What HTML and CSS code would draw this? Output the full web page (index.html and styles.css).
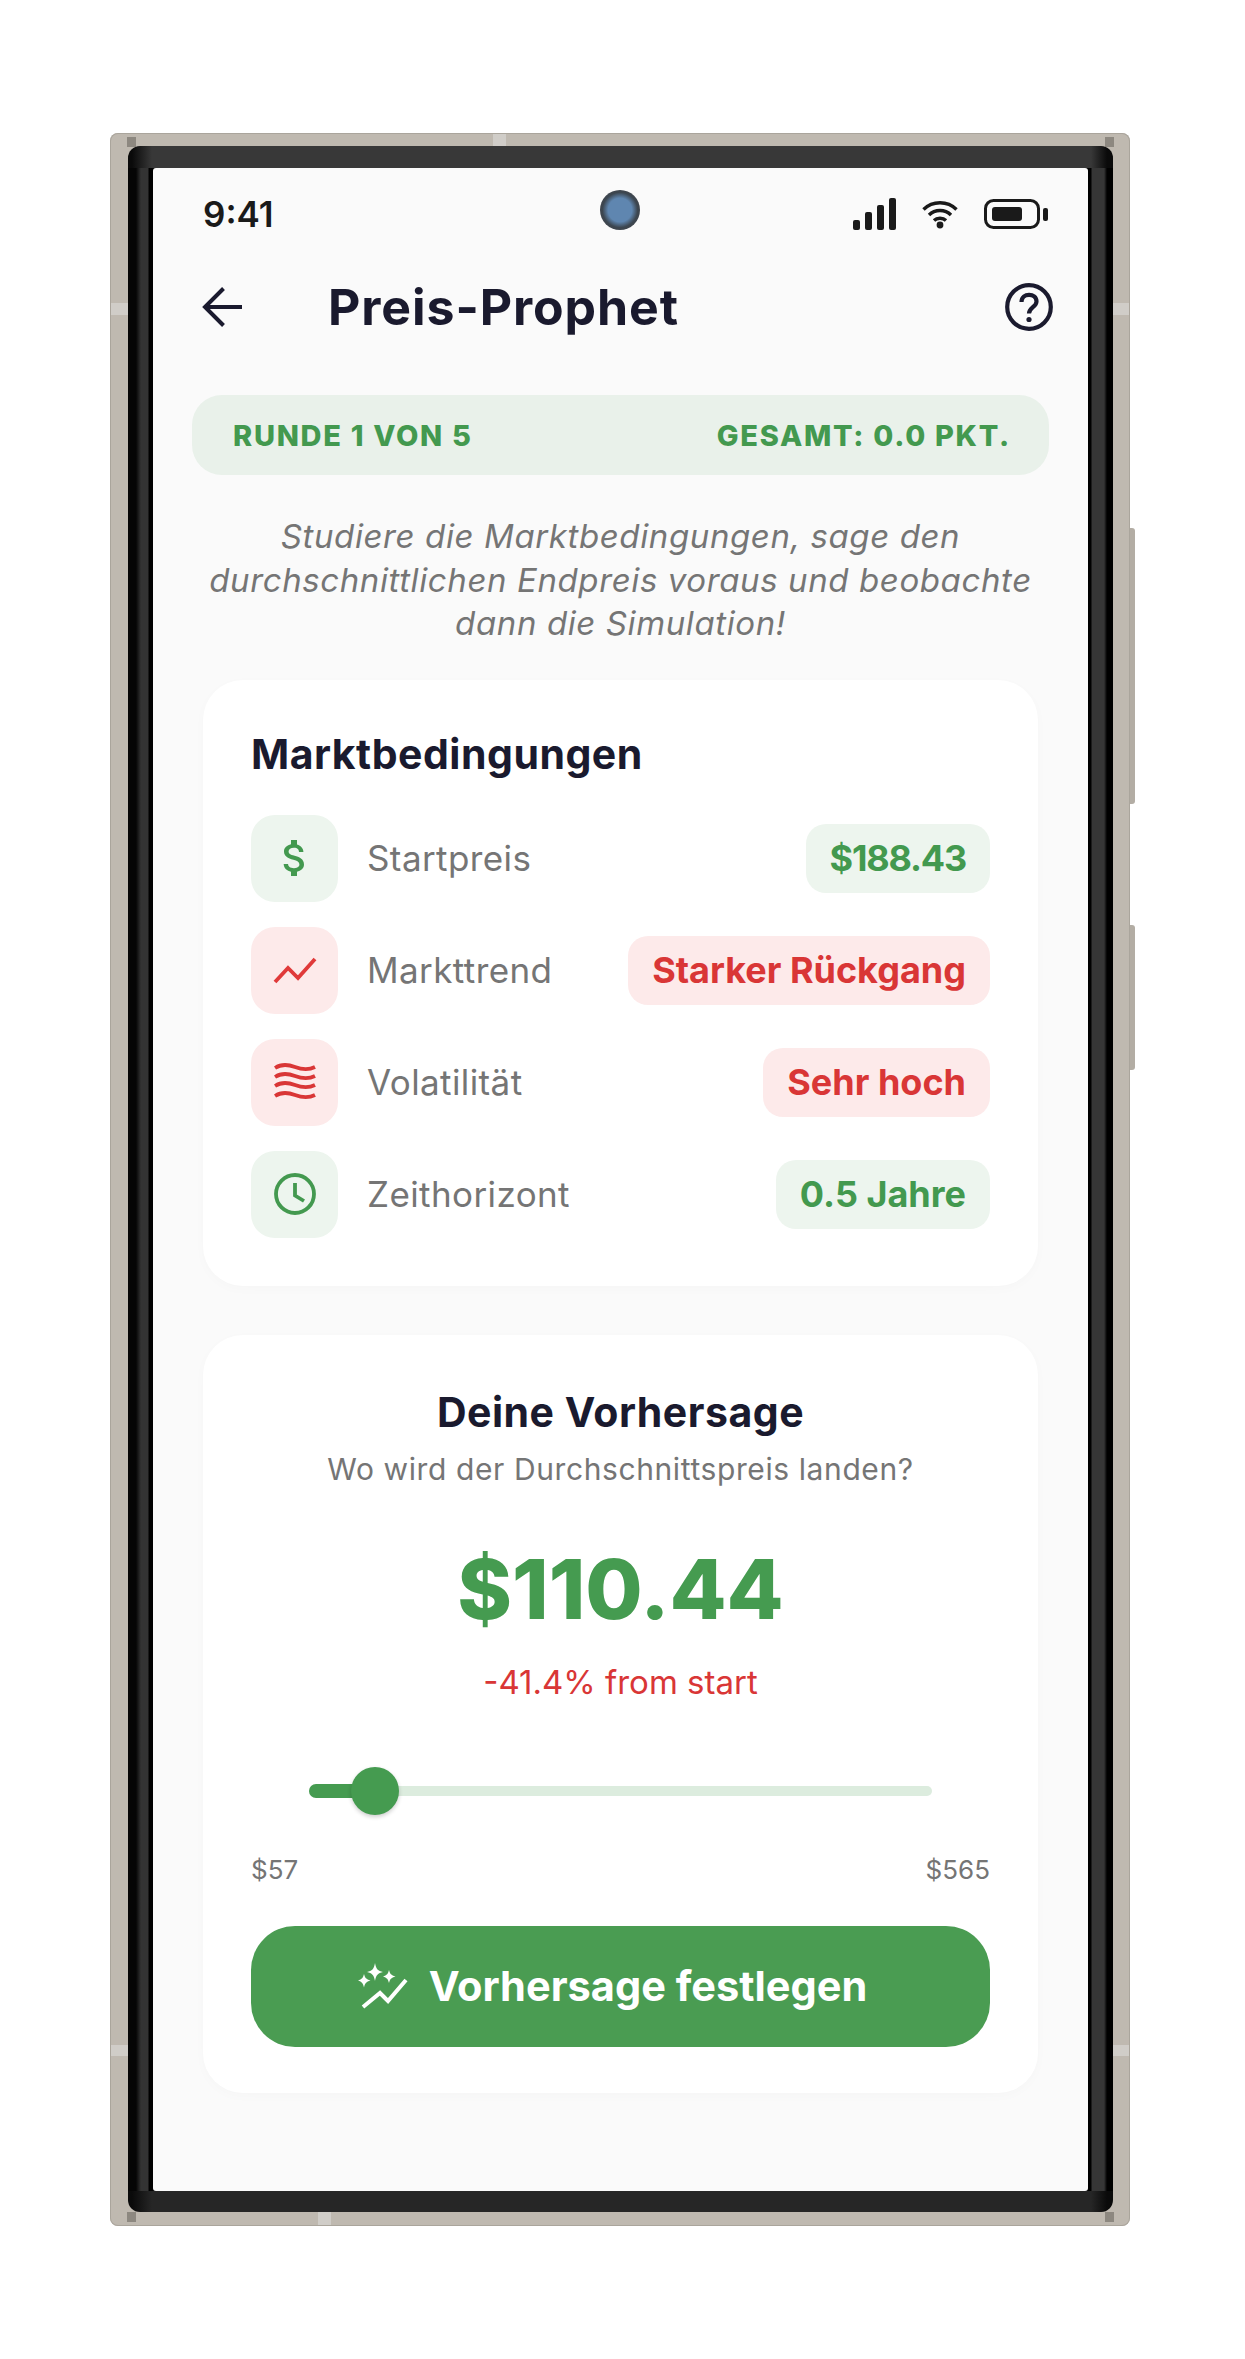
FILE: index.html
```html
<!DOCTYPE html>
<html lang="de">
<head>
    <meta charset="UTF-8">
    <title>Preis-Prophet</title>
    <link rel="stylesheet" href="styles.css">
</head>
<body>
    <div class="phone">
        <span class="band band-top"></span>
        <span class="band band-bottom"></span>
        <span class="band band-left"></span>
        <span class="band band-right"></span>
        <span class="band band-left-low"></span>
        <span class="band band-right-low"></span>
        <span class="notch notch-tl"></span>
        <span class="notch notch-tr"></span>
        <span class="notch notch-bl"></span>
        <span class="notch notch-br"></span>
        <span class="side-key key-power"></span>
        <span class="side-key key-volume"></span>
        <div class="bezel">
            <div class="screen">
                <div class="camera"></div>
                <div class="status-bar">
                    <span class="clock">9:41</span>
                    <div class="status-icons">
                        <svg width="43" height="32" viewBox="0 0 43 32" fill="#1a1a1a">
                            <rect x="0" y="22" width="7" height="10" rx="2"/>
                            <rect x="12" y="14" width="7" height="18" rx="2"/>
                            <rect x="24" y="7" width="7" height="25" rx="2"/>
                            <rect x="36" y="0" width="7" height="32" rx="2"/>
                        </svg>
                        <svg width="36" height="30" viewBox="0 0 36 30" fill="none" stroke="#1a1a1a" stroke-width="3.4">
                            <path d="M1.5 10.5 C10.5 1.5 25.5 1.5 34.5 10.5"/>
                            <path d="M7 16 C13 10 23 10 29 16"/>
                            <path d="M12 21.5 C15 18.5 21 18.5 24 21.5"/>
                            <circle cx="18" cy="26" r="3.4" fill="#1a1a1a" stroke="none"/>
                        </svg>
                        <svg width="64" height="30" viewBox="0 0 64 30">
                            <rect x="1.5" y="1.5" width="53" height="27" rx="8" fill="none" stroke="#1a1a1a" stroke-width="3"/>
                            <rect x="8" y="8" width="30" height="14" rx="3" fill="#1a1a1a"/>
                            <rect x="59" y="9" width="5" height="13" rx="2" fill="#1a1a1a"/>
                        </svg>
                    </div>
                </div>

                <div class="top-bar">
                    <svg class="back-icon" width="40" height="40" viewBox="0 0 40 40" fill="none" stroke="#1a1a2e" stroke-width="4">
                        <path d="M40 20 H3"/>
                        <path d="M21.500 1.500 L3 20 L21.500 38.500"/>
                    </svg>
                    <h1 class="page-title">Preis-Prophet</h1>
                    <svg class="help-icon" width="48" height="48" viewBox="0 0 48 48" fill="none" stroke="#1a1a2e" stroke-width="4.2">
                        <circle cx="24" cy="24" r="21.800"/>
                        <path d="M16.500 19 C16.500 9.500 31.500 9.500 31.500 18.500 C31.500 24 24 24.500 24 30.500"/>
                        <circle cx="24" cy="36.500" r="2.600" fill="#1a1a2e" stroke="none"/>
                    </svg>
                </div>

                <div class="round-banner">
                    <span>RUNDE 1 VON 5</span>
                    <span>GESAMT: 0.0 PKT.</span>
                </div>

                <p class="intro">Studiere die Marktbedingungen, sage den durchschnittlichen Endpreis voraus und beobachte dann die Simulation!</p>

                <section class="card market-card">
                    <h2 class="card-title">Marktbedingungen</h2>
                    <div class="market-row">
                        <div class="row-icon icon-green">
                            <svg width="48" height="48" viewBox="0 0 24 24" fill="#43994f">
                                <path d="M11.800 10.900c-2.270-.590-3-1.200-3-2.150 0-1.090 1.010-1.850 2.700-1.850 1.780 0 2.440.850 2.500 2.100h2.210c-.070-1.720-1.120-3.300-3.210-3.810V3h-3v2.160c-1.940.420-3.500 1.680-3.500 3.610 0 2.310 1.910 3.460 4.700 4.130 2.500.600 3 1.480 3 2.410 0 .690-.490 1.790-2.700 1.790-2.060 0-2.870-.920-2.980-2.100h-2.200c.120 2.190 1.760 3.420 3.680 3.830V21h3v-2.150c1.950-.370 3.500-1.500 3.500-3.550 0-2.840-2.430-3.810-4.700-4.400z"/>
                            </svg>
                        </div>
                        <span class="row-label">Startpreis</span>
                        <span class="pill pill-green pill-price">$188.43</span>
                    </div>
                    <div class="market-row">
                        <div class="row-icon icon-red">
                            <svg width="44" height="30" viewBox="0 0 44 30" fill="none" stroke="#e03a3a" stroke-width="3.800">
                                <path d="M2 27 L15 13 L25 23 L42 4"/>
                            </svg>
                        </div>
                        <span class="row-label">Markttrend</span>
                        <span class="pill pill-red">Starker Rückgang</span>
                    </div>
                    <div class="market-row">
                        <div class="row-icon icon-red">
                            <svg width="42" height="38" viewBox="0 0 42 38" fill="none" stroke="#d93636" stroke-width="3.800">
                                <path d="M1 5 C7 1 13 1 21 4 C29 7 35 7 41 4"/>
                                <path d="M1 14 C7 10 13 10 21 13 C29 16 35 16 41 13"/>
                                <path d="M1 23 C7 19 13 19 21 22 C29 25 35 25 41 22"/>
                                <path d="M1 33 C7 29 13 29 21 32 C29 35 35 35 41 32"/>
                            </svg>
                        </div>
                        <span class="row-label">Volatilität</span>
                        <span class="pill pill-red">Sehr hoch</span>
                    </div>
                    <div class="market-row">
                        <div class="row-icon icon-green">
                            <svg width="42" height="42" viewBox="0 0 42 42" fill="none" stroke="#43994f" stroke-width="3.800">
                                <circle cx="21" cy="21" r="19"/>
                                <path d="M21 10 V22.500 L30 28"/>
                            </svg>
                        </div>
                        <span class="row-label">Zeithorizont</span>
                        <span class="pill pill-green">0.5 Jahre</span>
                    </div>
                </section>

                <section class="card forecast-card">
                    <h2 class="card-title">Deine Vorhersage</h2>
                    <p class="forecast-hint">Wo wird der Durchschnittspreis landen?</p>
                    <div class="forecast-price">$110.44</div>
                    <div class="forecast-change">-41.4% from start</div>
                    <div class="slider">
                        <div class="slider-track"></div>
                        <div class="slider-fill"></div>
                        <div class="slider-thumb"></div>
                    </div>
                    <div class="slider-labels">
                        <span>$57</span>
                        <span>$565</span>
                    </div>
                    <button class="submit-btn">
                        <svg width="50" height="46" viewBox="0 0 50 46" fill="#fff">
                            <path d="M17 0 C18 6 20 8 25 9 C20 10 18 12 17 18 C16 12 14 10 9 9 C14 8 16 6 17 0 Z"/>
                            <path d="M6 11 C7 15 8 16 12.500 17.500 C8 19 7 20 6 24.500 C5 20 4 19 0 17.500 C4 16 5 15 6 11 Z"/>
                            <path d="M31 7 C32 11 33 12 37.500 13.500 C33 15 32 16 31 20 C30 16 29 15 25 13.500 C29 12 30 11 31 7 Z"/>
                            <path d="M5 44 L22 30 L30 38 L48 17" fill="none" stroke="#fff" stroke-width="4"/>
                        </svg>
                        Vorhersage festlegen
                    </button>
                </section>
            </div>
        </div>
    </div>
</body>
</html>
```

FILE: styles.css
```css
body {
    margin: 0;
    padding: 133px 0 0 110px;
    background: #fff;
    font-family: Inter, "Liberation Sans", sans-serif;
}
.phone {
    position: relative;
    width: 985px;
    height: 2066px;
    padding: 13px 17px 14px 18px;
    background: #bfb9b0;
    border-radius: 8px;
    box-shadow: inset 0 0 0 1px #aaa59c;
}
.band {
    position: absolute;
    background: #d0cdc8;
}
.band-top { top: 1px; left: 383px; width: 13px; height: 12px; }
.band-bottom { bottom: 1px; left: 208px; width: 13px; height: 13px; }
.band-left { top: 170px; left: 1px; width: 17px; height: 12px; }
.band-right { top: 170px; right: 1px; width: 16px; height: 12px; }
.band-left-low { top: 1912px; left: 1px; width: 17px; height: 11px; }
.band-right-low { top: 1912px; right: 1px; width: 16px; height: 11px; }
.notch {
    position: absolute;
    width: 9px;
    height: 10px;
    background: #8d8880;
}
.notch-tl { top: 4px; left: 17px; }
.notch-tr { top: 4px; right: 16px; }
.notch-bl { bottom: 4px; left: 17px; }
.notch-br { bottom: 4px; right: 16px; }
.side-key {
    position: absolute;
    right: -5px;
    width: 5px;
    background: #b3ada4;
    border-radius: 0 3px 3px 0;
}
.key-power { top: 395px; height: 276px; }
.key-volume { top: 792px; height: 145px; }
.bezel {
    position: relative;
    height: 100%;
    box-sizing: border-box;
    padding: 22px 25px 21px;
    border-radius: 12px;
    background:
        linear-gradient(90deg, #0a0a0a 4px, #383838 24px, #383838 calc(100% - 22px), #0a0a0a calc(100% - 6px)) top / 100% 22px no-repeat,
        linear-gradient(90deg, #0a0a0a 4px, #262626 24px, #262626 calc(100% - 22px), #0a0a0a calc(100% - 6px)) bottom / 100% 21px no-repeat,
        linear-gradient(90deg, #050505 0, #050505 8px, #333 13px, #333 20px, #000 21px, #000 calc(100% - 22px), #363636 calc(100% - 21px), #363636 calc(100% - 9px), #000 calc(100% - 6px));
}
.screen {
    position: relative;
    height: 100%;
    background: #fafafa;
    border-radius: 3px;
    overflow: hidden;
}
.camera {
    position: absolute;
    top: 22px;
    left: 447px;
    width: 40px;
    height: 40px;
    border-radius: 50%;
    background: radial-gradient(circle, #5f86b0 0, #5f86b0 42%, #3c4650 62%, #46464a 90%, #55555a 100%);
}
.status-bar {
    height: 88px;
    box-sizing: border-box;
    padding: 3px 40px 0 50px;
    display: flex;
    justify-content: space-between;
    align-items: center;
}
.clock {
    font-size: 35px;
    font-weight: 600;
    color: #1a1a1a;
}
.status-icons {
    display: flex;
    align-items: center;
    gap: 26px;
}
.top-bar {
    height: 102px;
    padding: 0 35px 0 49px;
    display: flex;
    align-items: center;
}
.page-title {
    flex: 1;
    margin: 0 0 0 86px;
    font-size: 50px;
    font-weight: 700;
    letter-spacing: 0.9px;
    color: #1a1a2e;
}
.round-banner {
    margin: 37px 39px 0;
    height: 80px;
    padding: 0 38px 0 41px;
    display: flex;
    justify-content: space-between;
    align-items: center;
    background: #e9f1ea;
    border-radius: 30px;
    color: #43994f;
    font-size: 29px;
    font-weight: 800;
    letter-spacing: 1.7px;
}
.intro {
    margin: 40px 40px 0;
    font-size: 33px;
    letter-spacing: 0.6px;
    line-height: 43.500px;
    font-style: italic;
    color: #757575;
    text-align: center;
}
.card {
    margin: 0 50px;
    background: #fff;
    border-radius: 40px;
    box-shadow: 0 3px 12px rgba(0, 0, 0, 0.02);
}
.market-card {
    margin-top: 34px;
    height: 606px;
    box-sizing: border-box;
    padding: 51px 48px 0;
}
.card-title {
    margin: 0;
    font-size: 41px;
    line-height: 46px;
    font-weight: 700;
    letter-spacing: 0.5px;
    color: #1a1a2e;
}
.market-card .card-title {
    margin-bottom: 38px;
}
.market-row {
    height: 87px;
    margin-bottom: 25px;
    display: flex;
    align-items: center;
}
.row-icon {
    width: 87px;
    height: 87px;
    display: flex;
    align-items: center;
    justify-content: center;
    border-radius: 24px;
}
.icon-green { background: #edf5ee; }
.icon-red { background: #fdeaea; }
.row-label {
    flex: 1;
    margin-left: 29px;
    font-size: 35px;
    letter-spacing: 0.4px;
    color: #757575;
}
.pill {
    height: 69px;
    line-height: 69px;
    padding: 0 24px;
    border-radius: 20px;
    font-size: 36px;
    font-weight: 700;
}
.pill-green { background: #edf5ee; color: #43994f; }
.pill-red { background: #fdeaea; color: #d93636; }
.pill-price { letter-spacing: -1.2px; }
.forecast-card {
    margin-top: 49px;
    height: 758px;
    box-sizing: border-box;
    padding: 54px 48px 0;
    text-align: center;
}
.forecast-hint {
    margin: 16px 0 0;
    font-size: 30px;
    letter-spacing: 0.6px;
    line-height: 36px;
    color: #757575;
}
.forecast-price {
    margin-top: 50px;
    font-size: 83px;
    line-height: 104px;
    font-weight: 800;
    color: #459b50;
}
.forecast-change {
    margin-top: 21px;
    font-size: 33px;
    line-height: 40px;
    color: #d93636;
}
.slider {
    position: relative;
    height: 48px;
    margin: 65px 58px 0;
}
.slider-track {
    position: absolute;
    top: 19px;
    left: 0;
    right: 0;
    height: 10px;
    background: #dcecde;
    border-radius: 5px;
}
.slider-fill {
    position: absolute;
    top: 17px;
    left: 0;
    width: 66px;
    height: 14px;
    background: #459b50;
    border-radius: 7px;
}
.slider-thumb {
    position: absolute;
    top: 0;
    left: 42px;
    width: 48px;
    height: 48px;
    background: #459b50;
    border-radius: 50%;
    box-shadow: 0 2px 4px rgba(0, 0, 0, 0.2);
}
.slider-labels {
    margin-top: 39px;
    display: flex;
    justify-content: space-between;
    font-size: 26px;
    line-height: 32px;
    color: #757575;
}
.submit-btn {
    width: 100%;
    height: 121px;
    margin-top: 40px;
    padding: 0 16px 0 0;
    display: flex;
    align-items: center;
    justify-content: center;
    gap: 21px;
    border: none;
    border-radius: 44px;
    background: #4a9c52;
    color: #fff;
    font-family: inherit;
    font-size: 41.500px;
    font-weight: 700;
}
```
